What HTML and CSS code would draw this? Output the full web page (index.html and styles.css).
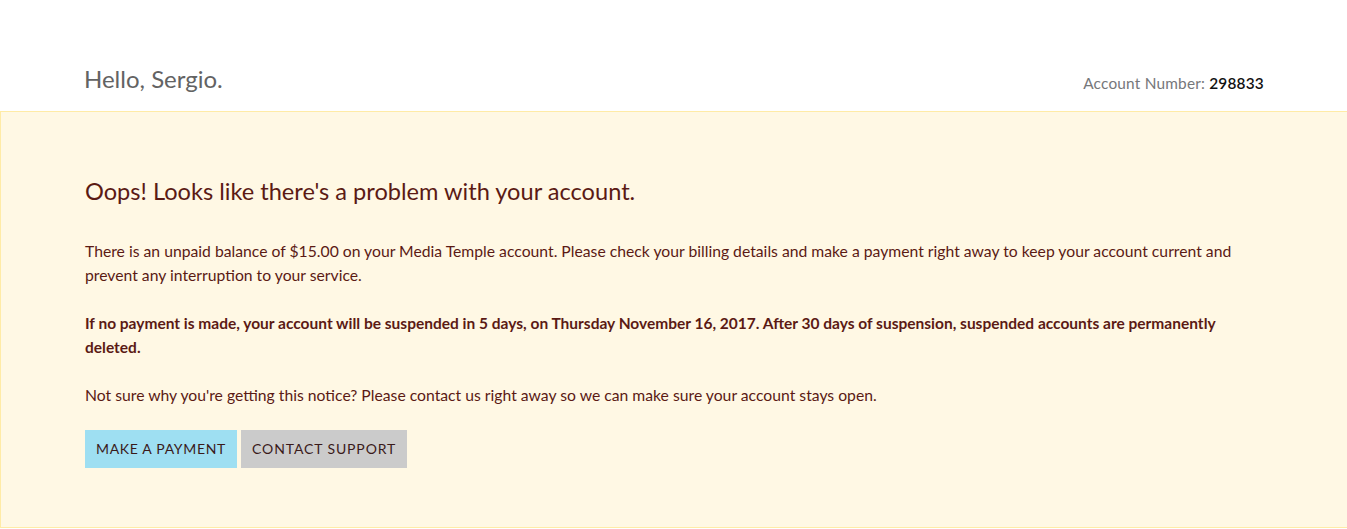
FILE: index.html
```html
<!DOCTYPE html>
<html>
<head>
<meta charset="utf-8">
<link rel="stylesheet" href="styles.css">
</head>
<body>
<header class="top">
  <h1 class="hello">Hello, Sergio.</h1>
  <div class="acct">Account Number: <strong>298833</strong></div>
</header>
<section class="alert">
  <h2 class="alert-title">Oops! Looks like there's a problem with your account.</h2>
  <p class="alert-text">There is an unpaid balance of $15.00 on your Media Temple account. Please check your billing details and make a payment right away to keep your account current and prevent any interruption to your service.</p>
  <p class="alert-text strong">If no payment is made, your account will be suspended in 5 days, on Thursday November 16, 2017. After 30 days of suspension, suspended accounts are permanently deleted.</p>
  <p class="alert-text">Not sure why you're getting this notice? Please contact us right away so we can make sure your account stays open.</p>
  <div class="actions">
    <a class="btn btn-pay" href="#">MAKE A PAYMENT</a>
    <a class="btn btn-support" href="#">CONTACT SUPPORT</a>
  </div>
</section>
</body>
</html>
```
FILE: styles.css
```css
html, body {
  margin: 0;
  padding: 0;
  background: #ffffff;
  font-family: Lato, "Open Sans", sans-serif;
}
.top {
  display: flex;
  justify-content: space-between;
  align-items: baseline;
  padding: 64px 83px 0 84px;
  height: 47px;
}
.hello {
  margin: 0;
  font-size: 24px;
  line-height: 30px;
  font-weight: 400;
  color: #636363;
}
.acct {
  font-size: 15.4px;
  color: #76777a;
  letter-spacing: 0.2px;
  position: relative;
  top: 1px;
}
.acct strong {
  color: #111;
  font-weight: 600;
}
.alert {
  background: #fff8e4;
  border: 1px solid #ffeba6;
  border-right: none;
  padding: 64px 84px 59px 84px;
  color: #5b1a14;
}
.alert-title {
  margin: 0 0 33px;
  font-size: 23.6px;
  line-height: 30px;
  font-weight: 400;
}
.alert-text {
  margin: 0 0 24px;
  font-size: 15.72px;
  line-height: 24px;
}
.alert-text.strong {
  font-weight: 700;
  font-size: 15.5px;
}
.actions {
  display: flex;
  gap: 4px;
  margin-top: -1px;
}
.btn {
  display: block;
  height: 38px;
  line-height: 38px;
  padding: 0 11px;
  font-size: 14px;
  color: #3a1a1a;
  text-decoration: none;
}
.btn-pay { background: #9edff2; letter-spacing: 0.68px; }
.btn-support { background: #cbcbcb; letter-spacing: 0.88px; }
```
